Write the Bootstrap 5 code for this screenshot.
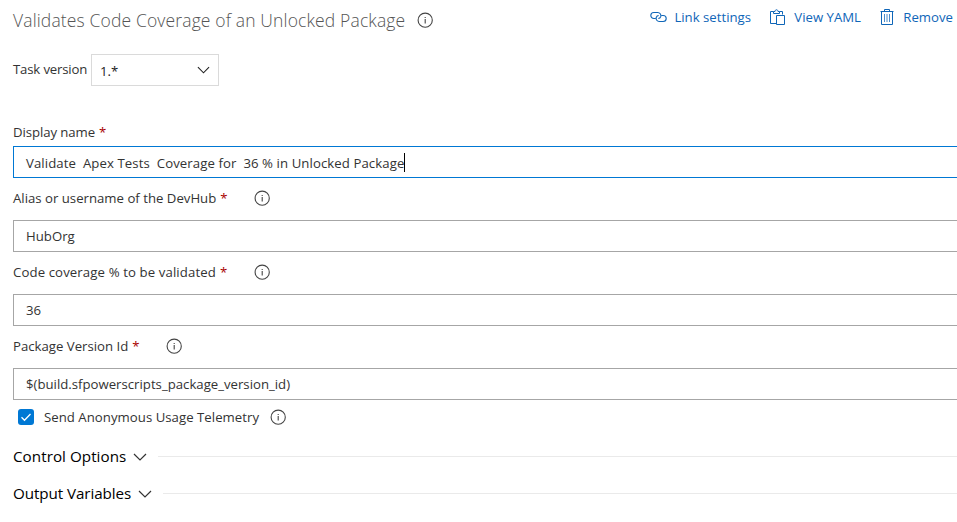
<!DOCTYPE html>
<html lang="en">
<head>
<meta charset="utf-8">
<meta name="viewport" content="width=device-width, initial-scale=1">
<title>Task settings</title>
<link href="https://cdn.jsdelivr.net/npm/bootstrap@5.3.0/dist/css/bootstrap.min.css" rel="stylesheet">
<style>
  body { font-family: "Open Sans", "Noto Sans", sans-serif; font-size: 13.2px; line-height: 20px; color: #333; background: #fff; overflow: hidden; height: 522px; }
  svg { display: block; flex: none; fill: none; stroke: currentColor; }
  .task-panel { padding-left: 13px; }
  .task-head { height: 40px; }
  .task-title { font-size: 17.5px; font-weight: 300; line-height: 24px; letter-spacing: .14px; color: #555; padding-top: 8px; width: 404px; white-space: nowrap; }
  .head-info { margin-top: 12px; }
  .task-actions { color: #0f66b8; padding: 7px 4px 0 0; }
  .task-actions a { color: inherit; height: 20px; white-space: nowrap; }
  .act-link { width: 101px; margin-right: 18px; }
  .act-yaml { width: 92px; margin-right: 19px; }
  .act-remove { width: 73px; }
  .version-row { padding-top: 14px; height: 46px; }
  .version-label { width: 78px; height: 32px; line-height: 31px; letter-spacing: -.17px; white-space: nowrap; }
  .version-select { width: 128px; height: 32px; border: 1px solid #dadada; padding: 0 8px 0 8px; color: #222; }
  .version-select span { padding-top: 2px; }
  .fields { padding-top: 36px; }
  .field-gap { height: 42px; padding-bottom: 2px; }
  .req { color: #a80000; margin-left: 4px; letter-spacing: 0; }
  .label-long { width: 241px; }
  .label-short { width: 153px; }
  .text-box { height: 32px; border: 1px solid #a6a6a6; border-right: 0; padding: 0 12px; white-space: pre; }
  .text-box.active { border-color: #0078d4; padding-top: 1px; }
  .caret { width: 1px; height: 19px; background: #000; }
  .t-display { letter-spacing: -.08px; }
  .t-name { letter-spacing: .075px; }
  .t-code { letter-spacing: .11px; }
  .box-checked { width: 16px; height: 16px; border-radius: 3px; background: #0078d4; color: #fff; }
  .telemetry { height: 34px; padding-left: 5px; }
  .telemetry-text { width: 236px; padding-left: 10px; letter-spacing: .03px; white-space: nowrap; }
  .section-list { padding-top: 3px; }
  .section-row { height: 37px; font-size: 15.2px; color: #000; white-space: nowrap; }
  .section-row svg { margin-top: 2px; color: #333; }
  .control-text { width: 120px; letter-spacing: .05px; }
  .output-text { width: 125px; letter-spacing: -.08px; }
  .section-rule { height: 1px; background: #eaeaea; margin: 2px 0 0 11px; }
</style>
</head>
<body>
<svg width="0" height="0" class="position-absolute" aria-hidden="true">
  <symbol id="info" viewBox="0 0 16 16"><circle cx="8.200" cy="8.200" r="7.100" stroke="#444" stroke-width="1.100"/><path d="M8.200 7v4.400M8.200 4.900v1.200" stroke="#444" stroke-width="1.100"/></symbol>
  <symbol id="chevron" viewBox="0 0 14 8"><path d="M1 1l6 6 6-6" stroke-width="1.200"/></symbol>
</svg>
<main class="task-panel">
  <header class="task-head d-flex align-items-start">
    <h1 class="task-title m-0"><span>Validates Code Coverage of an Unlocked Package</span></h1>
    <svg class="head-info" width="16" height="16"><use href="#info"/></svg>
    <nav class="task-actions d-flex ms-auto">
      <a href="#" class="act-link d-flex align-items-center justify-content-between text-decoration-none">
        <svg width="17" height="14" viewBox="0 0 17 14" stroke-width="1.100"><path d="M5.500 8.500H3.800A3 3 0 0 1 3.800 2.500H7.800A3.200 3.200 0 0 1 10.800 6.500C10.400 7.800 9.500 8.500 8.300 8.500M11.500 5.500H13.200A3 3 0 0 1 13.200 11.500H9.200A3.200 3.200 0 0 1 6.200 7.500C6.600 6.200 7.500 5.500 8.700 5.500"/></svg>
        <span>Link settings</span></a>
      <a href="#" class="act-yaml d-flex align-items-center justify-content-between text-decoration-none">
        <svg width="16" height="16" viewBox="0 0 16 16"><path d="M7.500 14.500H1.500V2.500H4.500M10.500 2.500H13.500V5.500M4.500 4.500V2.500H6C6 .2 9 .2 9 2.500H10.500V4.500ZM7.500 6.500H15.500V15.500H7.500Z"/></svg>
        <span>View YAML</span></a>
      <a href="#" class="act-remove d-flex align-items-center justify-content-between text-decoration-none">
        <svg width="14" height="16" viewBox="0 0 14 16"><path d="M.5 2.500H13.500M4.500 2.500V.5H9.500V2.500M1.500 2.500V15.500H12.500V2.500"/><path d="M4.500 5V13M7 5V13M9.500 5V13" opacity=".75"/></svg>
        <span>Remove</span></a>
    </nav>
  </header>
  <div class="version-row d-flex">
    <span class="version-label">Task version</span>
    <div class="version-select d-flex align-items-center justify-content-between"><span>1.*</span><svg width="13" height="8"><use href="#chevron"/></svg></div>
  </div>
  <div class="fields">
    <div class="d-flex align-items-center mb-1"><span class="t-display">Display name</span><span class="req">*</span></div>
    <div class="text-box active d-flex align-items-center"><span class="t-name">Validate  Apex Tests  Coverage for  36 % in Unlocked Package</span><span class="caret"></span></div>
    <div class="field-gap d-flex align-items-center"><span class="label-long"><span>Alias or username of the DevHub</span><span class="req">*</span></span><svg width="16" height="16"><use href="#info"/></svg></div>
    <div class="text-box d-flex align-items-center"><span>HubOrg</span></div>
    <div class="field-gap d-flex align-items-center"><span class="label-long"><span class="t-code">Code coverage % to be validated</span><span class="req">*</span></span><svg width="16" height="16"><use href="#info"/></svg></div>
    <div class="text-box d-flex align-items-center"><span>36</span></div>
    <div class="field-gap d-flex align-items-center"><span class="label-short"><span>Package Version Id</span><span class="req">*</span></span><svg width="16" height="16"><use href="#info"/></svg></div>
    <div class="text-box d-flex align-items-center"><span>$(build.sfpowerscripts_package_version_id)</span></div>
  </div>
  <div class="telemetry d-flex align-items-center">
    <span class="box-checked d-flex align-items-center justify-content-center"><svg width="12" height="10" viewBox="0 0 12 10"><path d="M1.500 5.200L4.500 8.200L10.500 2" stroke-width="1.300"/></svg></span>
    <span class="telemetry-text">Send Anonymous Usage Telemetry</span>
    <svg width="16" height="16"><use href="#info"/></svg>
  </div>
  <div class="section-list">
    <div class="section-row d-flex align-items-center"><span class="control-text">Control Options</span><svg width="14" height="8"><use href="#chevron"/></svg><span class="section-rule flex-grow-1"></span></div>
    <div class="section-row d-flex align-items-center"><span class="output-text">Output Variables</span><svg width="14" height="8"><use href="#chevron"/></svg><span class="section-rule flex-grow-1"></span></div>
  </div>
</main>
<script src="https://cdn.jsdelivr.net/npm/bootstrap@5.3.0/dist/js/bootstrap.bundle.min.js"></script>
</body>
</html>
